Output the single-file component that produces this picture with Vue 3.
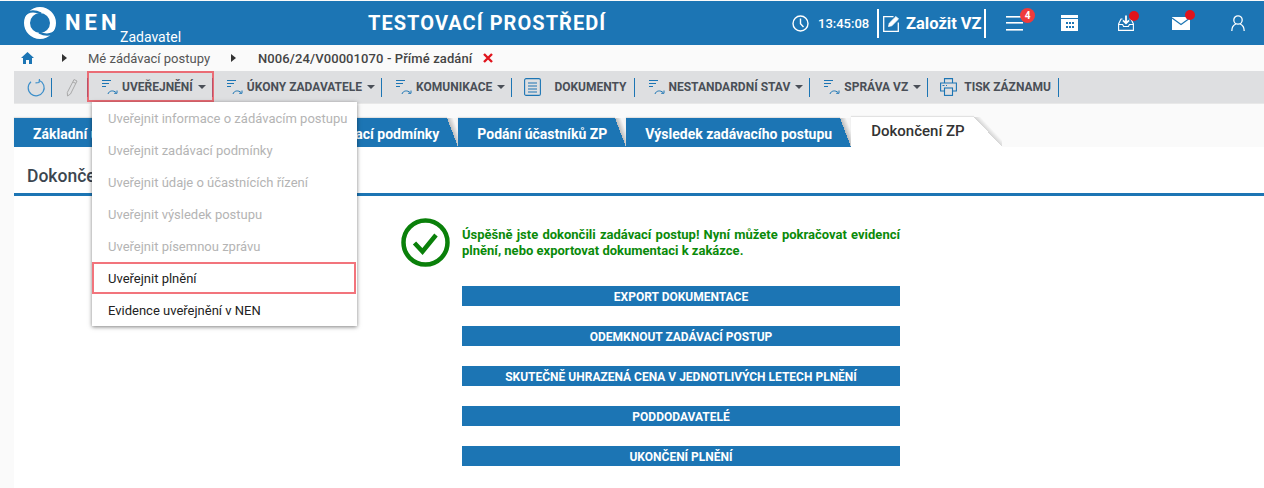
<template>
  <div class="page">
    <header class="top">
      <div class="logo">
        <svg width="36" height="36" viewBox="0 0 36 36" fill="none">
          <circle cx="18" cy="18" r="13" stroke="#fff" stroke-width="6"/>
          <path d="M1 12C6 5 12 5 19 8.500M35 24C30 31 24 31 17 27.500" stroke="#1c75b4" stroke-width="2.200"/>
        </svg>
        <span class="nen">NEN</span>
        <span class="role">Zadavatel</span>
      </div>
      <div class="env">TESTOVACÍ PROSTŘEDÍ</div>
      <svg class="clock" width="17" height="17" viewBox="0 0 17 17" fill="none" stroke="#fff" stroke-width="1.400">
        <circle cx="8.500" cy="8.500" r="7.500"/><path d="M8.500 3.500v5.200l3 3.300"/>
      </svg>
      <span class="time">13:45:08</span>
      <div class="create">
        <svg width="17" height="17" viewBox="0 0 17 17" fill="none" stroke="#fff" stroke-width="1.300">
          <path d="M10.500 1.700H.7v14.600h14.600V7.500"/><path d="M5.500 11.500l.8-3.300L13 1.500l2.500 2.500-6.700 6.700z" fill="#fff" stroke-width=".8"/>
        </svg>
        <span>Založit VZ</span>
      </div>
      <div class="tool burger">
        <svg width="17" height="16" viewBox="0 0 17 16" fill="#fff"><rect y="1" width="17" height="1.600"/><rect y="7" width="17" height="1.600"/><rect y="14" width="17" height="1.600"/></svg>
        <span class="badge">4</span>
      </div>
      <div class="tool cal">
        <svg width="17" height="16" viewBox="0 0 17 16">
          <path d="M0 0h17v16H0z" fill="#fff"/>
          <path d="M0 3.500h17" stroke="#1c75b4"/>
          <g fill="#1c75b4"><rect x="5" y="7" width="2" height="2"/><rect x="8" y="7" width="2" height="2"/><rect x="11" y="7" width="2" height="2"/><rect x="5" y="11" width="2" height="2"/><rect x="8" y="11" width="2" height="2"/><rect x="11" y="11" width="2" height="2"/></g>
        </svg>
      </div>
      <div class="tool inbox">
        <svg width="16" height="16" viewBox="0 0 16 16" fill="none" stroke="#fff" stroke-width="1.100">
          <path d="M4.500 4H3L.6 9v6.400h14.800V9L13 4h-1.500"/><path d="M.6 9.500h4l1 2h4.800l1-2h4"/><path d="M8 .5v7.500M5 5.300l3 3 3-3" stroke-width="1.800"/>
        </svg>
        <i class="dot"></i>
      </div>
      <div class="tool mail">
        <svg width="18" height="13" viewBox="0 0 18 13"><path d="M0 0h18v13H0z" fill="#fff"/><path d="M0 1l9 6.500L18 1" fill="none" stroke="#1c75b4" stroke-width="1.200"/></svg>
        <i class="dot"></i>
      </div>
      <svg class="user" width="14" height="16" viewBox="0 0 14 16" fill="none" stroke="#fff" stroke-width="1.300">
        <circle cx="7" cy="5" r="4.200"/><path d="M.8 16c0-3.500 1.700-6 4-7M13.200 16c0-3.500-1.700-6-4-7"/>
      </svg>
    </header>

    <nav class="crumbs">
      <svg class="home" width="13" height="12" viewBox="0 0 13 12" fill="#1c75b4"><path d="M6.500 0L0 6h2v6h3V8h3v4h3V6h2z"/></svg>
      <i class="arr first"></i>
      <span class="crumb">Mé zádávací postupy</span>
      <i class="arr second"></i>
      <b class="crumb-cur">N006/24/V00001070 - Přímé zadání</b>
      <svg class="close" width="10" height="10" viewBox="0 0 10 10" stroke="#e0141c" stroke-width="2.400"><path d="M1 1l8 8M9 1l-8 8"/></svg>
    </nav>

    <div class="toolbar">
      <svg class="reload" width="19" height="19" viewBox="0 0 19 19" fill="none" stroke="#3d8fca" stroke-width="1.200">
        <path d="M12 2.300A8 8 0 1 1 4 3.700M12.500 1l-.5 3.500-3.500.3"/>
      </svg>
      <i class="sep sep-a"></i>
      <svg class="pencil" width="12" height="19" viewBox="0 0 12 19" fill="none" stroke="#a9a9a9" stroke-width="1"><path d="M8 1.500l3 1.500-6.500 13-3 2-.2-3.500zM7 4l3 1.500"/></svg>
      <i class="sep sep-b"></i>
      <div v-for="item in menu" :key="item.label" class="tb-item" :class="item.cls">
        <svg v-if="item.icon === 'flow'" class="ic" width="16" height="16" viewBox="0 0 16 16" fill="none" stroke="#1c75b4" stroke-width="1">
          <path d="M0 1.500h9M0 4.500h7M0 7.500h4M6 15c1-3.500 5.500-4 8-1.500M15 11.500v2.800h-2.800"/>
        </svg>
        <svg v-else-if="item.icon === 'doc'" class="ic" width="17" height="18" viewBox="0 0 17 18" fill="none" stroke="#1c75b4" stroke-width="1.100">
          <rect x=".6" y=".6" width="15.800" height="16.800" rx="1.500"/><path d="M4 5h9M4 8h9M4 11h9M4 14h9"/>
        </svg>
        <svg v-else class="ic" width="17" height="18" viewBox="0 0 17 18" fill="none" stroke="#1c75b4" stroke-width="1.100">
          <path d="M4.500 5V.6h8V5M4 13H.6V5h15.800v8H13"/><rect x="4.500" y="10" width="8" height="7.400"/><path d="M2.500 7.500h2M6 7.500h1"/>
        </svg>
        <span class="lbl">{{ item.label }}</span>
        <i v-if="item.caret" class="caret"></i>
        <i class="sep"></i>
      </div>
    </div>

    <div class="tabs">
      <div v-for="tab in tabs" :key="tab.label" class="tab" :class="tab.cls">{{ tab.label }}</div>
    </div>

    <main class="content">
      <h1 class="title">Dokončení ZP</h1>
      <div class="body">
        <div class="msg">
          <svg width="49" height="49" viewBox="0 0 49 49" fill="none" stroke="#0a800a">
            <circle cx="24.500" cy="24.500" r="22" stroke-width="4.500"/>
            <path d="M13.500 25l8 8.500L35 17" stroke-width="4.500"/>
          </svg>
          <p>Úspěšně jste dokončili zadávací postup! Nyní můžete pokračovat evidencí plnění, nebo exportovat dokumentaci k zakázce.</p>
        </div>
        <div class="actions">
          <button v-for="a in actions" :key="a" class="act">{{ a }}</button>
        </div>
      </div>
    </main>

    <ul class="drop">
      <li v-for="d in dropItems" :key="d.label" :class="{ off: d.off, mark: d.mark }">{{ d.label }}</li>
    </ul>
  </div>
</template>

<script setup>
const menu = [
  { label: 'UVEŘEJNĚNÍ', icon: 'flow', caret: true, cls: 'active' },
  { label: 'ÚKONY ZADAVATELE', icon: 'flow', caret: true },
  { label: 'KOMUNIKACE', icon: 'flow', caret: true },
  { label: 'DOKUMENTY', icon: 'doc', caret: false, cls: 'docs' },
  { label: 'NESTANDARDNÍ STAV', icon: 'flow', caret: true },
  { label: 'SPRÁVA VZ', icon: 'flow', caret: true },
  { label: 'TISK ZÁZNAMU', icon: 'print', caret: false, cls: 'print' }
]

const tabs = [
  { label: 'Základní údaje', cls: 'first' },
  { label: 'Zadávací podmínky' },
  { label: 'Podání účastníků ZP' },
  { label: 'Výsledek zadávacího postupu' },
  { label: 'Dokončení ZP', cls: 'current' }
]

const actions = [
  'EXPORT DOKUMENTACE',
  'ODEMKNOUT ZADÁVACÍ POSTUP',
  'SKUTEČNĚ UHRAZENÁ CENA V JEDNOTLIVÝCH LETECH PLNĚNÍ',
  'PODDODAVATELÉ',
  'UKONČENÍ PLNĚNÍ'
]

const dropItems = [
  { label: 'Uveřejnit informace o zádávacím postupu', off: true },
  { label: 'Uveřejnit zadávací podmínky', off: true },
  { label: 'Uveřejnit údaje o účastnících řízení', off: true },
  { label: 'Uveřejnit výsledek postupu', off: true },
  { label: 'Uveřejnit písemnou zprávu', off: true },
  { label: 'Uveřejnit plnění', mark: true },
  { label: 'Evidence uveřejnění v NEN' }
]
</script>

<style>
body { background: #fafafa; overflow: hidden; }
</style>

<style scoped>
.page {
  position: relative;
  width: 1264px;
  height: 488px;
  overflow: hidden;
  font-family: Roboto, "Liberation Sans", sans-serif;
  background: #fafafa;
}

.top {
  display: flex;
  align-items: center;
  height: 44px;
  margin-top: 1px;
  background: #1c75b4;
  color: #fff;
}
.logo {
  display: flex;
  align-items: center;
  width: 368px;
  padding-left: 22px;
  box-sizing: border-box;
  flex: none;
}
.nen {
  width: 55px;
  font-size: 22px;
  font-weight: 700;
  letter-spacing: 4px;
  margin-left: 7px;
  line-height: 28px;
  margin-top: -1px;
}
.role {
  font-size: 14px;
  margin-top: 27px;
  line-height: 16px;
}
.env {
  width: 424px;
  flex: none;
  font-size: 20px;
  font-weight: 700;
  letter-spacing: 1.050px;
}
.clock { flex: none; }
.time {
  width: 59px;
  margin-left: 9px;
  font-size: 13px;
  font-weight: 500;
}
.create {
  display: flex;
  align-items: center;
  gap: 6px;
  height: 29px;
  width: 109px;
  box-sizing: border-box;
  padding-left: 4px;
  border-left: 2px solid #fff;
  border-right: 2px solid #fff;
  font-size: 16.500px;
  font-weight: 700;
  white-space: nowrap;
}
.tool {
  position: relative;
  display: flex;
}
.burger { margin-left: 20px; }
.cal { margin-left: 38px; }
.inbox { margin-left: 40px; }
.mail { margin-left: 38px; }
.user { margin-left: 41px; }
.badge {
  position: absolute;
  left: 14px;
  top: -7px;
  width: 15px;
  height: 15px;
  border-radius: 50%;
  background: #ef3b3b;
  font-size: 10px;
  font-weight: 700;
  line-height: 15px;
  text-align: center;
}
.dot {
  position: absolute;
  right: -5px;
  top: -4px;
  width: 10px;
  height: 10px;
  border-radius: 50%;
  background: #e0141c;
}
.mail .dot { top: -7px; }

.crumbs {
  display: flex;
  align-items: center;
  height: 26px;
  font-size: 13px;
  color: #555;
}
.home { margin-left: 21px; }
.arr {
  width: 0;
  height: 0;
  border-left: 5px solid #333;
  border-top: 4px solid transparent;
  border-bottom: 4px solid transparent;
}
.arr.first { margin: 0 21px 0 28px; }
.arr.second { margin: 0 22px 0 21px; }
.crumb-cur {
  font-weight: 500;
  color: #444;
  letter-spacing: .1px;
}
.close { margin-left: 11px; }

.toolbar {
  display: flex;
  align-items: center;
  height: 33px;
  margin-left: 14px;
  background: #dedfe1;
  border-bottom: 1px solid #e8e8e8;
  box-sizing: border-box;
}
.reload { margin-left: 13px; }
.sep {
  flex: none;
  width: 1px;
  height: 19px;
  background: #1c75b4;
}
.sep-a { margin-left: 5px; }
.pencil { margin-left: 14px; }
.sep-b { margin-left: 9px; }
.tb-item {
  position: relative;
  display: flex;
  align-items: center;
  height: 32px;
  padding-left: 14px;
  color: #4a4f57;
}
.tb-item .sep { margin-left: 6px; }
.tb-item .ic { margin-right: 4px; flex: none; }
.tb-item.docs { padding-left: 12px; }
.tb-item.docs .ic { margin-right: 13px; }
.tb-item.docs .sep { margin-left: 7px; }
.tb-item.print { padding-left: 12px; }
.tb-item.print .ic { margin-right: 7px; }
.tb-item.print .sep { margin-left: 7px; }
.lbl {
  font-size: 12px;
  font-weight: 700;
  white-space: nowrap;
}
.caret {
  margin-left: 5px;
  width: 0;
  height: 0;
  border-top: 4px solid #4a4f57;
  border-left: 4px solid transparent;
  border-right: 4px solid transparent;
}
.active::after {
  content: "";
  position: absolute;
  left: -1px;
  right: -1px;
  top: 0;
  height: 31px;
  box-sizing: border-box;
  border: 2px solid rgba(238, 70, 80, .75);
}

.tabs {
  display: flex;
  align-items: flex-end;
  height: 30px;
  margin: 13px 0 0 14px;
}
.tab {
  position: relative;
  height: 29px;
  padding: 0 8px 0 19px;
  margin-right: 11px;
  line-height: 32px;
  font-size: 14px;
  font-weight: 700;
  color: #fff;
  white-space: nowrap;
  background: #1c75b4;
  box-shadow: 0 -1px 1px #e2e2e2;
}
.tab::after {
  content: "";
  position: absolute;
  top: 0;
  bottom: 0;
  left: 100%;
  width: 11px;
  background: linear-gradient(to top right, #1c75b4 50%, #bdbdbd 50%, #f5f5f5 78%);
}
.tab.first { width: 273px; box-sizing: border-box; }
.tab.current {
  height: 30px;
  background: #fff;
  color: #333;
  font-size: 15px;
  font-weight: 500;
  line-height: 29px;
  padding: 0 9px 0 20px;
  margin-right: 0;
}
.tab.current::after {
  width: 28px;
  background: linear-gradient(to top right, #fff 50%, #d4d4d4 50%, #fafafa 62%);
}

.content {
  margin-left: 14px;
  background: #fff;
  height: 341px;
}
.title {
  margin: 0;
  padding: 18px 0 0 13px;
  height: 49px;
  box-sizing: border-box;
  border-bottom: 3px solid #1c75b4;
  font-size: 17.500px;
  font-weight: 500;
  color: #3c4650;
  line-height: 22px;
}
.body {
  display: flex;
  flex-direction: column;
  width: 499px;
  margin-left: 387px;
  padding-top: 22px;
}
.msg {
  display: flex;
  align-items: flex-start;
  gap: 12px;
}
.msg svg { flex: none; }
.msg p {
  margin: 9px 0 0;
  width: 438px;
  font-size: 13px;
  font-weight: 700;
  line-height: 16px;
  color: #0a8a0a;
  text-align: justify;
}
.actions {
  display: flex;
  flex-direction: column;
  gap: 20px;
  width: 438px;
  margin: 19px 0 0 61px;
}
.act {
  height: 20px;
  padding: 2px 0 0;
  border: 0;
  background: #1c75b4;
  color: #fff;
  font-family: inherit;
  font-size: 12px;
  font-weight: 700;
}

.drop {
  position: absolute;
  left: 92px;
  top: 102px;
  width: 265px;
  margin: 0;
  padding: 0;
  list-style: none;
  background: #fff;
  box-shadow: 0 1px 4px rgba(0, 0, 0, .5);
  font-size: 13px;
  color: #222;
}
.drop li {
  height: 32px;
  padding-left: 16px;
  line-height: 34px;
  box-sizing: border-box;
  white-space: nowrap;
}
.drop li.off { color: #b4b4b4; }
.drop li.mark {
  outline: 2px solid rgba(238, 70, 80, .75);
  outline-offset: -2px;
  width: 264px;
}
</style>
